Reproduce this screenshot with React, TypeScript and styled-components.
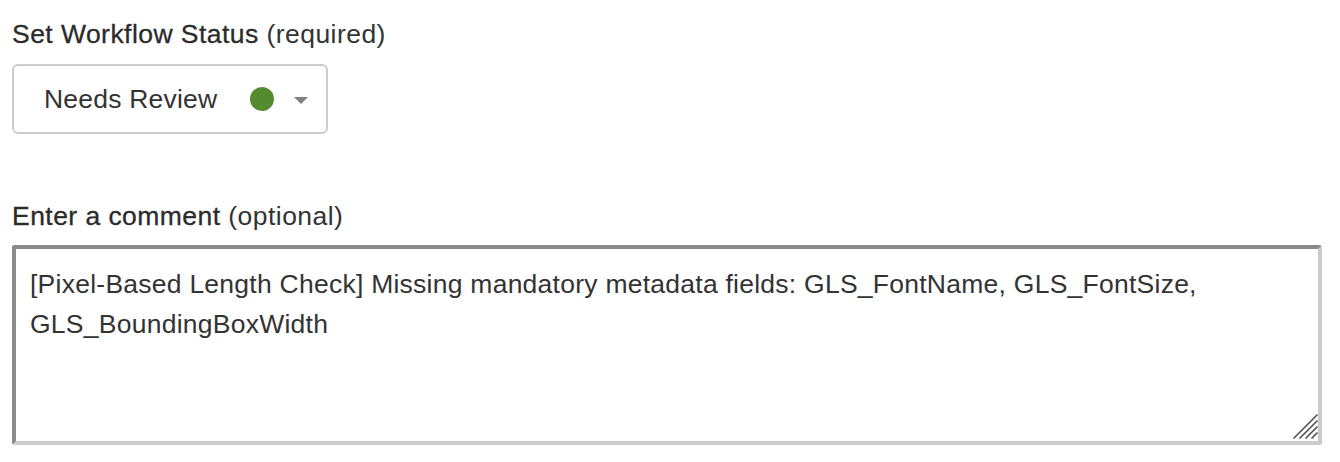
import React from "react";
import styled, { createGlobalStyle } from "styled-components";

const GlobalStyle = createGlobalStyle`
    html, body {
        margin: 0;
        padding: 0;
        background: #fff;
    }
    body {
        font-family: "Liberation Sans", Arial, Helvetica, sans-serif;
        color: #333;
    }
`;

const Form = styled.div`
    padding: 17px 18px 0 12px;
    display: flex;
    flex-direction: column;
`;

const Field = styled.div<{ $gap?: number }>`
    display: flex;
    flex-direction: column;
    margin-bottom: ${(p) => p.$gap ?? 0}px;
`;

const Label = styled.label<{ $space?: number }>`
    font-size: 26.5px;
    letter-spacing: 0.45px;
    line-height: 34px;
    color: #2b2b2b;
    -webkit-text-stroke: 0.3px #2b2b2b;
    margin-bottom: ${(p) => p.$space ?? 13}px;
`;

const Hint = styled.span`
    color: #333;
    -webkit-text-stroke: 0;
`;

const Select = styled.div`
    box-sizing: border-box;
    width: 316px;
    height: 70px;
    border: 2px solid #ccc;
    border-radius: 6px;
    display: flex;
    align-items: center;
    padding-left: 30px;
    font-size: 26.5px;
    letter-spacing: 0.2px;
    color: #333;
`;

const SelectText = styled.span`
    flex: 1;
`;

const Dot = styled.span<{ $color: string }>`
    width: 24px;
    height: 24px;
    border-radius: 50%;
    background: ${(p) => p.$color};
    margin-right: 20px;
`;

const Caret = styled.span`
    width: 0;
    height: 0;
    border-left: 7px solid transparent;
    border-right: 7px solid transparent;
    border-top: 7px solid #808080;
    margin-right: 18px;
    margin-top: 2px;
`;

const AreaWrap = styled.div`
    position: relative;
    width: 1310px;
`;

const Comment = styled.textarea`
    box-sizing: border-box;
    display: block;
    width: 1310px;
    height: 200px;
    margin: 0;
    border-style: solid;
    border-width: 4px;
    border-color: #8a8a8a #cbcbcb #cbcbcb #8a8a8a;
    border-radius: 3px;
    padding: 15px 14px;
    font-family: "Liberation Sans", Arial, Helvetica, sans-serif;
    font-size: 26.5px;
    letter-spacing: 0.25px;
    line-height: 40px;
    color: #333;
    resize: none;
    outline: none;
    background: #fff;
`;

const Grip = styled.svg`
    position: absolute;
    right: 4px;
    bottom: 6px;
    width: 26px;
    height: 26px;
    pointer-events: none;
`;

const App = () => {
    return (
        <>
            <GlobalStyle />
            <Form>
                <Field $gap={65}>
                    <Label>
                        Set Workflow Status <Hint>(required)</Hint>
                    </Label>
                    <Select>
                        <SelectText>Needs Review</SelectText>
                        <Dot $color="#558b2f" />
                        <Caret />
                    </Select>
                </Field>
                <Field>
                    <Label $space={12}>
                        Enter a comment <Hint>(optional)</Hint>
                    </Label>
                    <AreaWrap>
                        <Comment
                            readOnly
                            defaultValue="[Pixel-Based Length Check] Missing mandatory metadata fields: GLS_FontName, GLS_FontSize, GLS_BoundingBoxWidth"
                        />
                        <Grip viewBox="0 0 26 26">
                            <g stroke="#555" strokeWidth="1.7" strokeLinecap="round">
                                <line x1="2" y1="25" x2="25" y2="2" />
                                <line x1="8" y1="25" x2="25" y2="8" />
                                <line x1="14" y1="25" x2="25" y2="14" />
                                <line x1="20" y1="25" x2="25" y2="20" />
                            </g>
                        </Grip>
                    </AreaWrap>
                </Field>
            </Form>
        </>
    );
};

export default App;
